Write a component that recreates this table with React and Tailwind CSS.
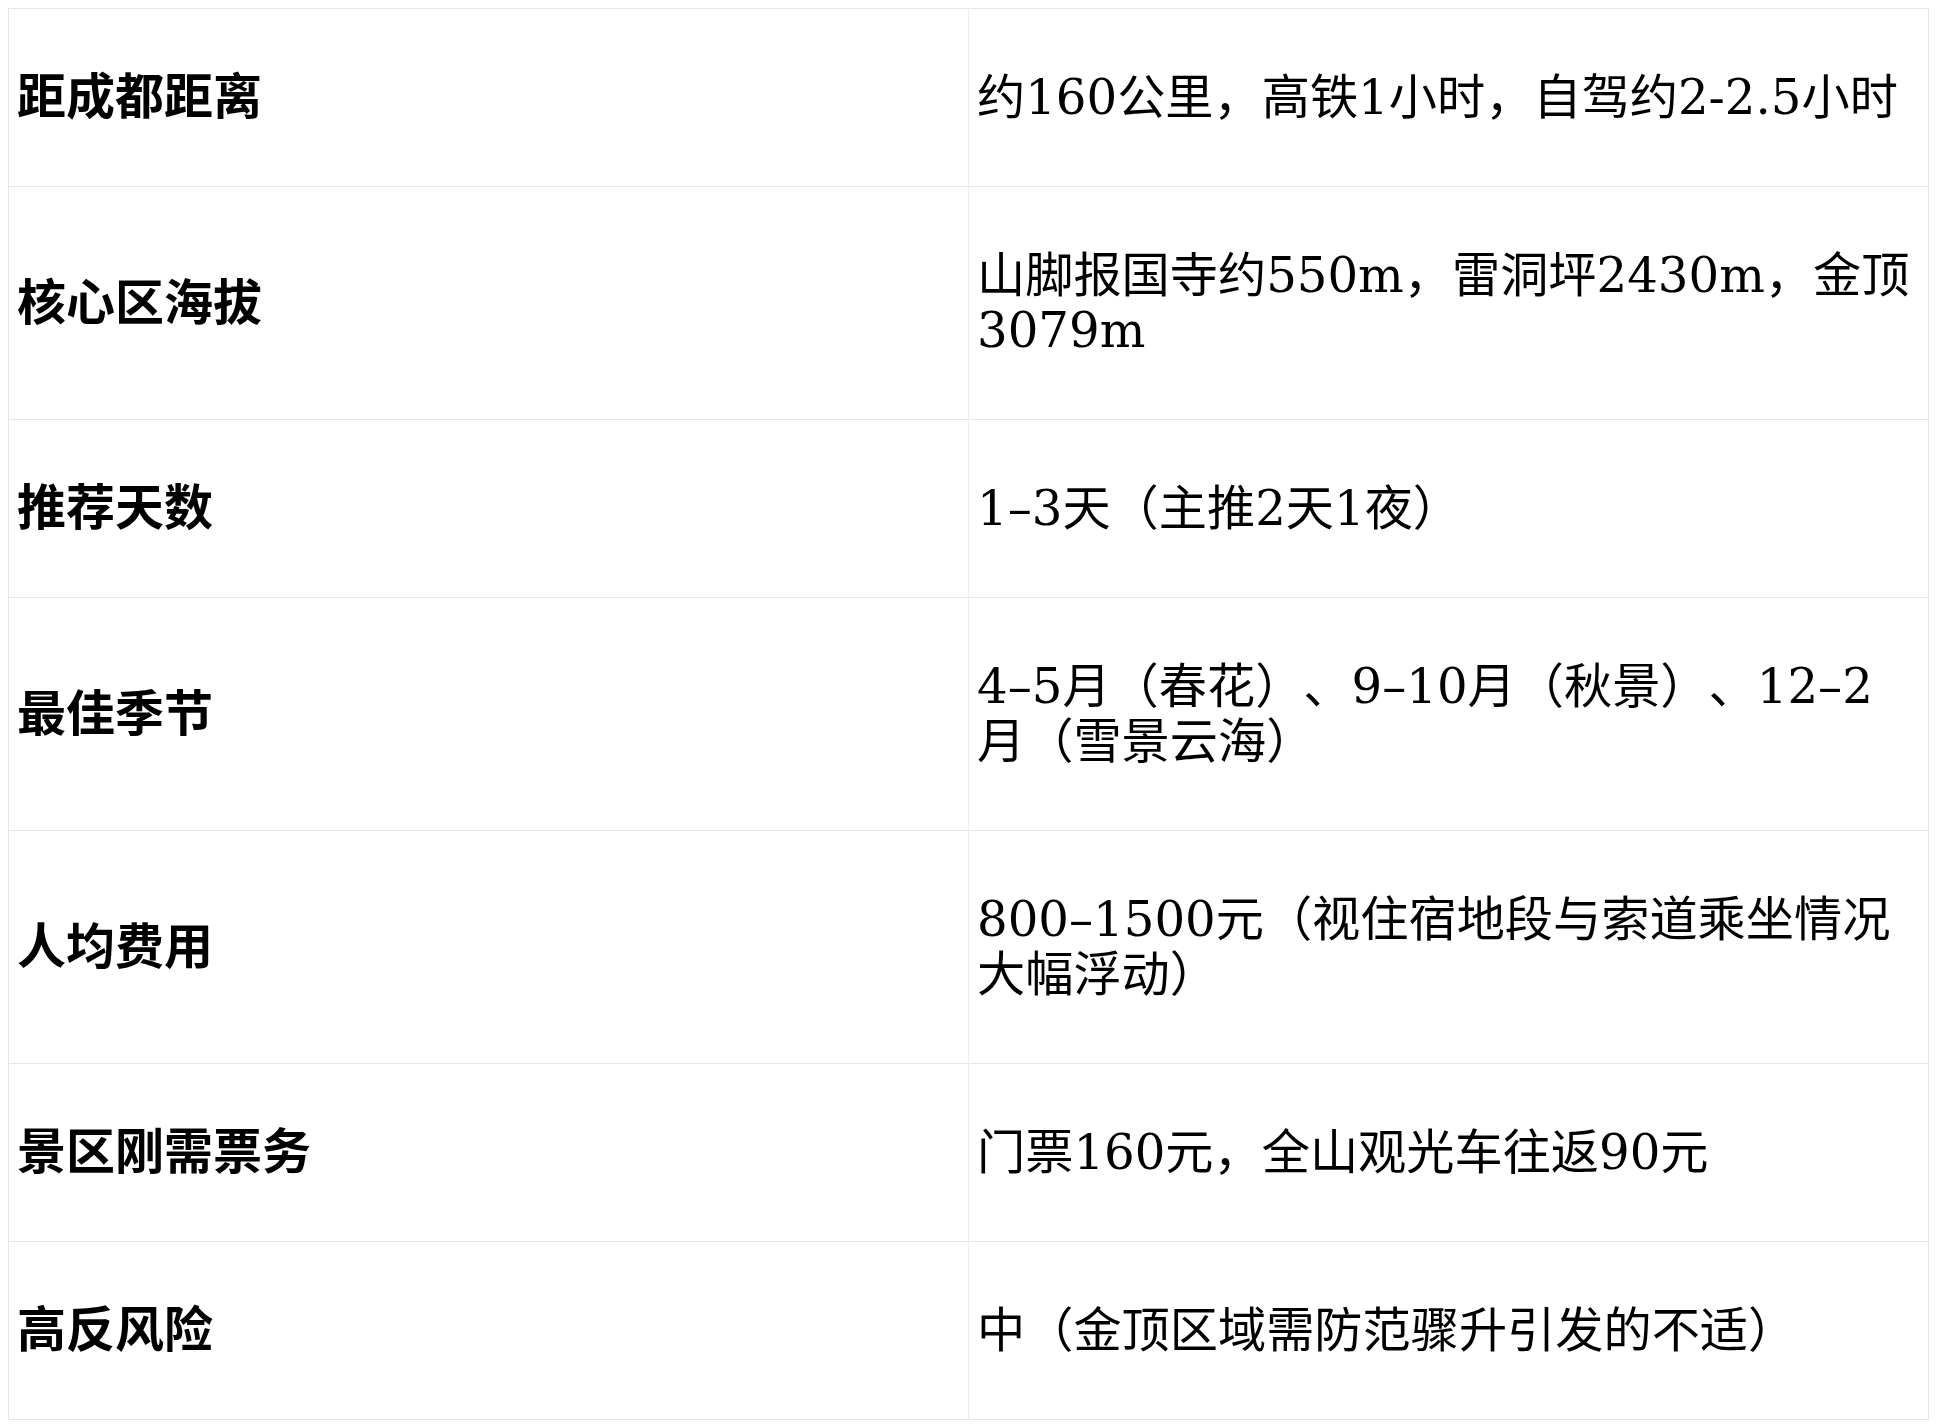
import React from "react";

const rows = [
  { label: "距成都距离", value: "约160公里，高铁1小时，自驾约2-2.5小时" },
  { label: "核心区海拔", value: "山脚报国寺约550m，雷洞坪2430m，金顶3079m" },
  { label: "推荐天数", value: "1–3天（主推2天1夜）" },
  { label: "最佳季节", value: "4–5月（春花）、9–10月（秋景）、12–2月（雪景云海）" },
  { label: "人均费用", value: "800–1500元（视住宿地段与索道乘坐情况大幅浮动）" },
  { label: "景区刚需票务", value: "门票160元，全山观光车往返90元" },
  { label: "高反风险", value: "中（金顶区域需防范骤升引发的不适）" },
];

const App = () => {
  return (
    <div className="bg-white min-h-[1427px] p-2 font-['DejaVu_Serif','Noto_Sans_CJK_SC',serif] text-black [text-spacing-trim:space-all]">
      <table className="w-[1921px] table-fixed border-collapse border border-[#e6e6e6]">
        <tbody>
          {rows.map((row) => (
            <tr key={row.label} className="border-b border-[#e6e6e6]">
              <td className="w-1/2 border-r border-[#ececec] px-2 py-[61px] align-middle text-[49px] leading-[55px] font-bold">
                {row.label}
              </td>
              <td className="w-1/2 px-2 py-[61px] align-middle text-[48.2px] leading-[55px]">
                {row.value}
              </td>
            </tr>
          ))}
        </tbody>
      </table>
    </div>
  );
};

export default App;
